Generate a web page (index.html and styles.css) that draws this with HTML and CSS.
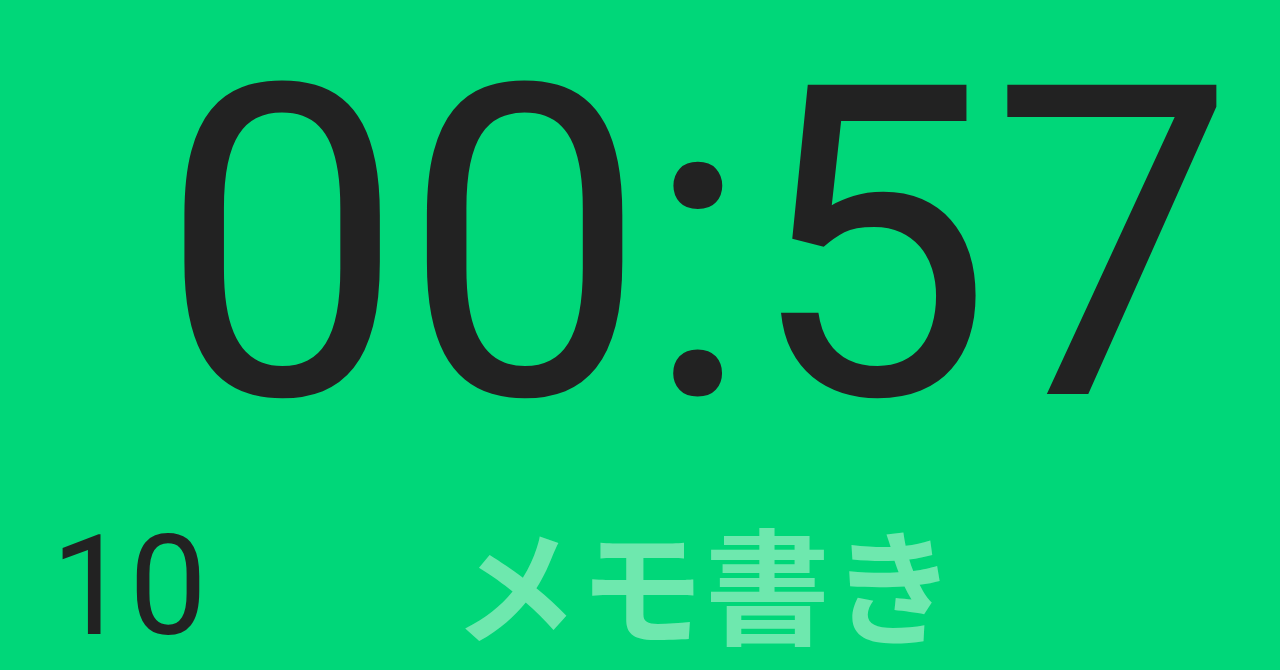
FILE: index.html
```html
<!DOCTYPE html>
<html lang="ja">
<head>
<meta charset="utf-8">
<title>Timer</title>
<link rel="stylesheet" href="styles.css">
</head>
<body>
<main class="screen">
  <div class="time">00:57</div>
  <div class="bottom">
    <div class="count">10</div>
    <div class="label">メモ書き</div>
  </div>
</main>
</body>
</html>
```

FILE: styles.css
```css
html, body {
  margin: 0;
  padding: 0;
  background: #00d779;
}
.screen {
  width: 1280px;
  height: 670px;
  overflow: hidden;
  background: #00d779;
  display: flex;
  flex-direction: column;
}
.time {
  font-family: Roboto, "Liberation Sans", sans-serif;
  font-size: 435px;
  line-height: 1.1;
  color: #222222;
  padding-top: 6px;
  padding-left: 160px;
  letter-spacing: -2px;
  white-space: nowrap;
}
.bottom {
  display: flex;
  align-items: flex-start;
  margin-top: 32px;
}
.count {
  box-sizing: border-box;
  width: 453px;
  flex: none;
  font-family: Roboto, "Liberation Sans", sans-serif;
  font-size: 139px;
  line-height: 139px;
  color: #222222;
  padding-left: 51px;
}
.label {
  font-family: "Noto Sans CJK JP", "Noto Sans", sans-serif;
  font-weight: 700;
  font-size: 125px;
  line-height: 125px;
  color: #6ee8ae;
  letter-spacing: 1px;
  margin-top: 1px;
  white-space: nowrap;
}
```
